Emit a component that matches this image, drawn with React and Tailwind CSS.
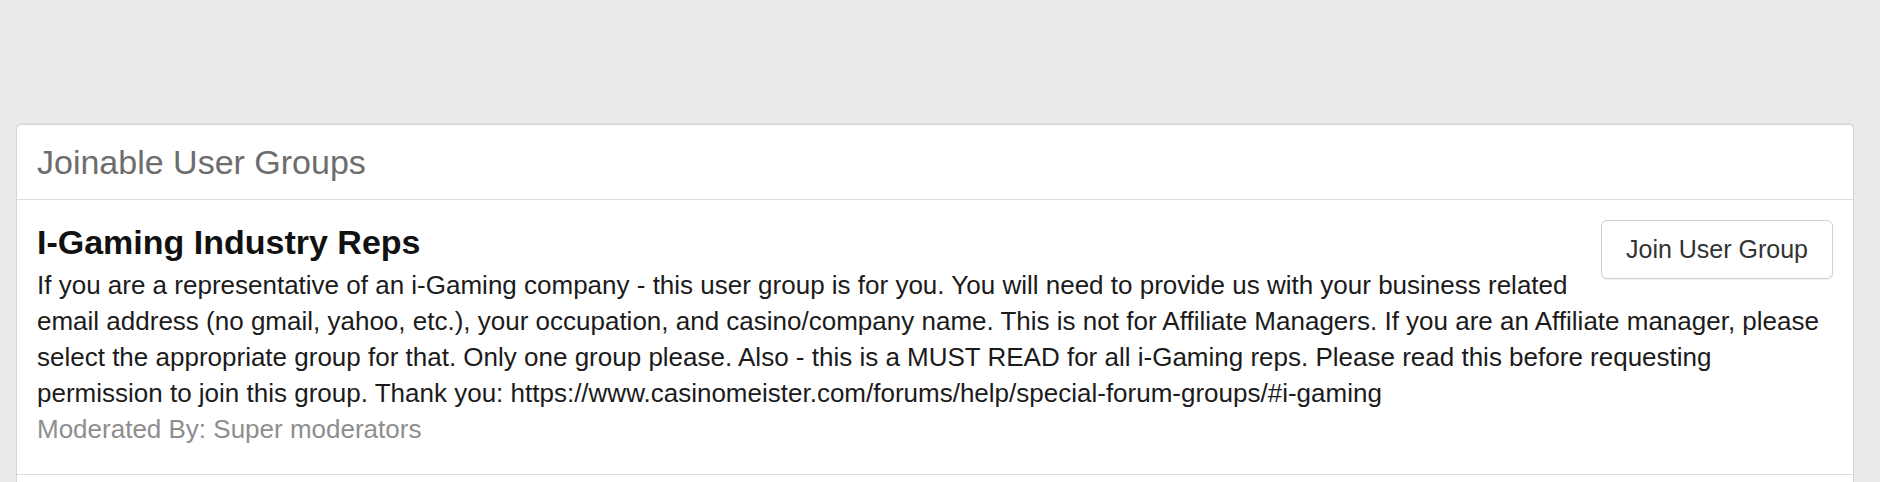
import React from 'react';

const group = {
  name: 'I-Gaming Industry Reps',
  description:
    'If you are a representative of an i-Gaming company - this user group is for you. You will need to provide us with your business related email address (no gmail, yahoo, etc.), your occupation, and casino/company name. This is not for Affiliate Managers. If you are an Affiliate manager, please select the appropriate group for that. Only one group please. Also - this is a MUST READ for all i-Gaming reps. Please read this before requesting permission to join this group. Thank you: https://www.casinomeister.com/forums/help/special-forum-groups/#i-gaming',
  moderators: 'Super moderators',
};

export default function App() {
  return (
    <div className="min-h-screen bg-[#ebebeb] pt-[124px] pl-4 pr-[26px] font-['Liberation_Sans',Helvetica,Arial,sans-serif]">
      <div className="rounded-t-[5px] border border-[#d6d6d6] bg-white shadow-[0_-1px_2px_rgba(0,0,0,0.06)]">
        {/* panel header */}
        <div className="border-b border-[#dedede] px-5 py-[18px]">
          <h2 className="text-[34px] leading-[38px] text-[#6d6d6d]">Joinable User Groups</h2>
        </div>

        {/* group row */}
        <div className="border-b border-[#dedede] px-5 pt-[22px] pb-[27px]">
          <button className="float-right ml-4 -mt-[2px] h-[59px] w-[232px] rounded-[6px] border border-[#cfcfcf] bg-white text-[25px] text-[#333] shadow-[0_1px_1px_rgba(0,0,0,0.06)]">
            Join User Group
          </button>
          <h3 className="mb-[5px] text-[34px] font-bold leading-[40px] text-[#111]">{group.name}</h3>
          <p className="text-[26px] leading-[36px] text-[#1b1b1b]">{group.description}</p>
          <p className="text-[26px] leading-[36px] text-[#8e8e8e]">Moderated By: {group.moderators}</p>
        </div>

        <div className="h-[60px]" />
      </div>
    </div>
  );
}
